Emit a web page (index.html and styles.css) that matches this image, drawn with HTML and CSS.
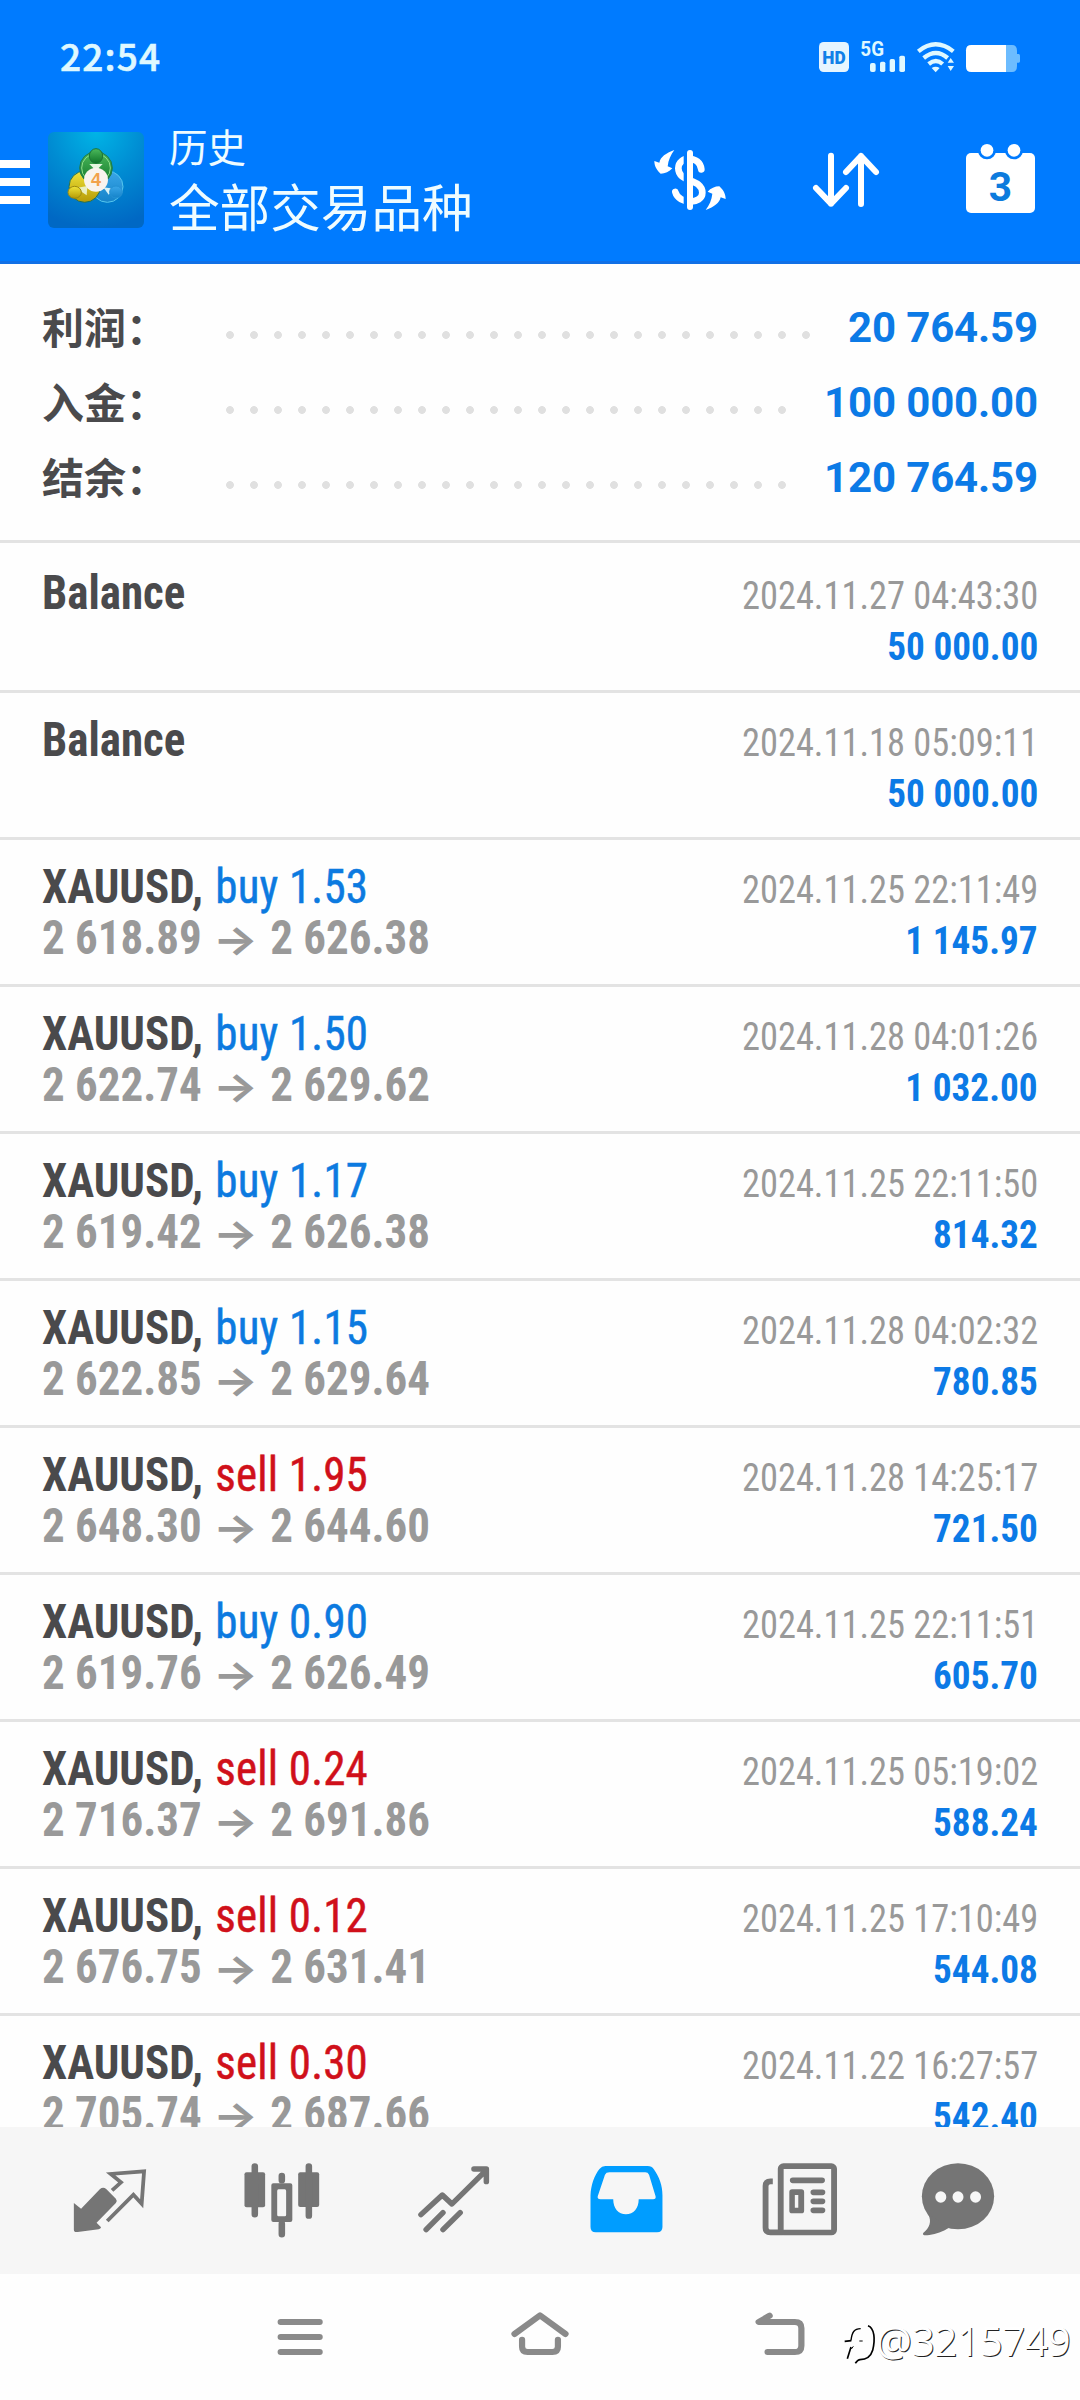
FILE: index.html
```html
<!DOCTYPE html>
<html lang="zh-CN">
<head>
<meta charset="utf-8">
<title>历史</title>
<link rel="stylesheet" href="styles.css">
</head>
<body>
<div class="screen">
  <header class="header">
    <div class="status">
      <span class="clock">22:54</span>
      <div class="status-icons">
        <svg width="30" height="35" viewBox="27 27 90 105"><rect x="27" y="36" width="90" height="90" rx="14" fill="#e6f5ff"/><text x="37" y="101" class="hd-text" textLength="70" lengthAdjust="spacingAndGlyphs">HD</text></svg>
        <svg width="46" height="35" viewBox="150 27 138 105" fill="#dff8ff"><text x="151" y="79" class="net-text" textLength="71" lengthAdjust="spacingAndGlyphs">5G</text><rect x="180" y="99" width="17" height="27" rx="6"/><rect x="210" y="95" width="16" height="31" rx="5"/><rect x="239" y="87" width="16" height="39" rx="5"/><rect x="268" y="77" width="17" height="49" rx="5"/></svg>
        <svg width="38" height="35" viewBox="322 27 114 105"><g fill="none" stroke="#dff8ff" stroke-width="13"><path d="M326 64Q378 22 431 64M342 84Q379 54 414 84M357 102Q379 84 399 102"/></g><path fill="#dff8ff" d="M366 114Q378 106 390 114L378 127ZM423 84L433 98H414ZM414 108H433L423 123Z"/></svg>
        <svg width="54" height="35" viewBox="468 27 162 105"><path fill="#6cbcff" d="M585 45H606Q621 45 621 62V72H626Q630 72 630 77V94Q630 98 626 98H621V108Q621 126 606 126H585Z"/><path fill="#fff" d="M588 45H484Q468 45 468 61V110Q468 126 484 126H588Z"/></svg>
      </div>
    </div>
    <div class="appbar">
      <div class="menu"><i></i><i></i><i></i></div>
      <svg class="logo" width="96" height="96" viewBox="24 24 288 288">
        <defs>
          <radialGradient id="bg" cx=".5" cy="0" r="1"><stop offset="0" stop-color="#00b4e6"/><stop offset=".5" stop-color="#008bd2"/><stop offset="1" stop-color="#0068c4"/></radialGradient>
          <linearGradient id="gr" x1="0" y1="0" x2="0" y2="1"><stop offset="0" stop-color="#4cba5c"/><stop offset="1" stop-color="#0f7428"/></linearGradient>
          <linearGradient id="ye" x1="0" y1="0" x2="0" y2="1"><stop offset="0" stop-color="#f0e43a"/><stop offset="1" stop-color="#b59a06"/></linearGradient>
          <linearGradient id="bl" x1="0" y1="0" x2="0" y2="1"><stop offset="0" stop-color="#3aa6e8"/><stop offset="1" stop-color="#1583c9"/></linearGradient>
        </defs>
        <rect x="24" y="24" width="288" height="288" rx="18" fill="url(#bg)"/>
        <g stroke-width="3">
          <circle cx="202" cy="188" r="47" fill="url(#bl)" stroke="#55c6ee"/>
          <circle cx="134" cy="188" r="47" fill="url(#ye)" stroke="#1f6f5b"/>
          <circle cx="168" cy="132" r="49" fill="url(#gr)" stroke="#1c7a4e"/>
          <circle cx="168" cy="132" r="43" fill="none" stroke="#8fdc8b"/>
          <path d="M190 190L222 194L206 212Z" fill="#d7f2f7" stroke="none"/>
          <path d="M108 192L142 186L140 214Z" fill="#e9efc0" stroke="none"/>
          <path d="M148 120H188L168 140Z" fill="#e4f7df" stroke="none"/>
          <ellipse cx="168" cy="96" rx="20" ry="22" fill="url(#gr)" stroke="#1d7336"/>
          <ellipse cx="104" cy="205" rx="20" ry="18" fill="url(#ye)" stroke="#9c8a10"/>
          <ellipse cx="228" cy="204" rx="19" ry="18" fill="url(#bl)" stroke="#2491d4"/>
        </g>
        <circle cx="168" cy="167" r="36" fill="#f8f3ee"/>
        <text x="168" y="186" class="logo-text">4</text>
      </svg>
      <div class="titles"><div class="subtitle">历史</div><div class="title">全部交易品种</div></div>
      <div class="actions">
        <svg width="84" height="84" viewBox="144 414 252 252"><path d="M304 508C300 466 235 466 235 505C235 550 307 534 307 578C307 614 236 614 226 576" fill="none" stroke="#fff" stroke-width="20" stroke-linecap="round"/><path d="M256 460V620" stroke="#007bff" stroke-width="10"/><path d="M270 459V621" stroke="#fff" stroke-width="18" stroke-linecap="round"/><g fill="#fff"><path id="sw" d="M223 450C197 460 182 470 178 488L163 483C163 500 172 512 182 521C195 521 208 515 217 505L203 499C205 480 212 465 223 450Z"/><use href="#sw" transform="rotate(180 270 540)"/></g></svg>
        <svg width="84" height="84" viewBox="609 414 252 252" fill="none" stroke="#fff" stroke-width="18" stroke-linecap="round" stroke-linejoin="round"><path d="M693 467V611M648 564L693 611L738 564M783 612V468M738 516L783 468L828 516"/></svg>
        <svg width="84" height="84" viewBox="1074 414 252 252"><rect x="1098" y="459" width="207" height="180" rx="15" fill="#fff"/><g fill="#007bff"><circle cx="1161" cy="451" r="27"/><circle cx="1242" cy="451" r="27"/></g><g fill="#fff"><circle cx="1161" cy="451" r="19"/><circle cx="1242" cy="451" r="19"/></g><text x="1201" y="602" class="cal-text">3</text></svg>
      </div>
    </div>
  </header>

  <main class="content">
    <section class="summary">
      <div class="sum-row"><span class="sum-label">利润：</span><span class="leader"></span><span class="sum-value">20 764.59</span></div>
      <div class="sum-row"><span class="sum-label">入金：</span><span class="leader"></span><span class="sum-value">100 000.00</span></div>
      <div class="sum-row"><span class="sum-label">结余：</span><span class="leader"></span><span class="sum-value">120 764.59</span></div>
    </section>
    <section class="deals">
      <div class="deal"><span class="symbol">Balance</span><span class="date">2024.11.27 04:43:30</span><span class="prices"></span><span class="profit">50 000.00</span></div>
      <div class="deal"><span class="symbol">Balance</span><span class="date">2024.11.18 05:09:11</span><span class="prices"></span><span class="profit">50 000.00</span></div>
      <div class="deal"><span class="symbol">XAUUSD, <span class="buy">buy 1.53</span></span><span class="date">2024.11.25 22:11:49</span><span class="prices">2 618.89<b class="arrow">→</b>2 626.38</span><span class="profit">1 145.97</span></div>
      <div class="deal"><span class="symbol">XAUUSD, <span class="buy">buy 1.50</span></span><span class="date">2024.11.28 04:01:26</span><span class="prices">2 622.74<b class="arrow">→</b>2 629.62</span><span class="profit">1 032.00</span></div>
      <div class="deal"><span class="symbol">XAUUSD, <span class="buy">buy 1.17</span></span><span class="date">2024.11.25 22:11:50</span><span class="prices">2 619.42<b class="arrow">→</b>2 626.38</span><span class="profit">814.32</span></div>
      <div class="deal"><span class="symbol">XAUUSD, <span class="buy">buy 1.15</span></span><span class="date">2024.11.28 04:02:32</span><span class="prices">2 622.85<b class="arrow">→</b>2 629.64</span><span class="profit">780.85</span></div>
      <div class="deal"><span class="symbol">XAUUSD, <span class="sell">sell 1.95</span></span><span class="date">2024.11.28 14:25:17</span><span class="prices">2 648.30<b class="arrow">→</b>2 644.60</span><span class="profit">721.50</span></div>
      <div class="deal"><span class="symbol">XAUUSD, <span class="buy">buy 0.90</span></span><span class="date">2024.11.25 22:11:51</span><span class="prices">2 619.76<b class="arrow">→</b>2 626.49</span><span class="profit">605.70</span></div>
      <div class="deal"><span class="symbol">XAUUSD, <span class="sell">sell 0.24</span></span><span class="date">2024.11.25 05:19:02</span><span class="prices">2 716.37<b class="arrow">→</b>2 691.86</span><span class="profit">588.24</span></div>
      <div class="deal"><span class="symbol">XAUUSD, <span class="sell">sell 0.12</span></span><span class="date">2024.11.25 17:10:49</span><span class="prices">2 676.75<b class="arrow">→</b>2 631.41</span><span class="profit">544.08</span></div>
      <div class="deal"><span class="symbol">XAUUSD, <span class="sell">sell 0.30</span></span><span class="date">2024.11.22 16:27:57</span><span class="prices">2 705.74<b class="arrow">→</b>2 687.66</span><span class="profit">542.40</span></div>
    </section>
  </main>

  <nav class="tabs">
    <svg preserveAspectRatio="none" viewBox="198 416 244 252"><path fill="#757575" d="M215 548L236 565L291 506Q300 498 309 506L337 535Q342 541 337 548L281 607L294 621Q293 626 287 627L226 635Q215 637 215 628Z"/><path fill="none" stroke="#757575" stroke-width="11" d="M326 510L352 486L322 461L419 453L412 550L388 523L312 602"/></svg>
    <svg preserveAspectRatio="none" viewBox="696 416 244 252"><g fill="#757575"><rect x="709" y="456" width="60" height="105" rx="6"/><rect x="865" y="456" width="61" height="104" rx="6"/><path fill-rule="evenodd" d="M793 489H842Q848 489 848 495V599Q848 605 842 605H793Q787 605 787 599V495Q787 489 793 489ZM808 507Q804 507 804 512V583Q804 588 808 588H826Q830 588 830 583V512Q830 507 826 507Z"/></g><path stroke="#757575" stroke-width="19" stroke-linecap="round" d="M739 438V582M896 438V586M817.500 467V480M817.500 610V642"/></svg>
    <svg preserveAspectRatio="none" viewBox="1196 416 244 252"><path fill="none" stroke="#757575" stroke-width="16" stroke-linecap="round" stroke-linejoin="round" d="M1222 583L1284 524L1312 551L1411 450M1376 446H1412V484M1237 628L1286 577M1286 628L1336 577"/></svg>
    <svg preserveAspectRatio="none" viewBox="131 416 244 252"><path fill="#009dff" fill-rule="evenodd" d="M190 437H313Q325 437 331 447C347 470 356 495 356 525V620Q356 636 340 636H162Q147 636 147 620V525C148 495 158 465 173 446Q180 437 190 437ZM202 456Q192 456 189 463L168 528Q166 537 176 537H213C213 565 228 582 250 582C272 582 287 565 287 537H329Q338 537 336 528L317 463Q314 456 306 456Z"/></svg>
    <svg preserveAspectRatio="none" viewBox="634 416 244 252"><g fill="none" stroke="#757575" stroke-width="17"><rect x="700" y="437.500" width="155" height="199" rx="8"/><path d="M677 483H670Q656 483 656 497V622Q656 636 670 636H705"/><path stroke-linecap="round" d="M735 480H820M795 516H821M795 543H821M795 570H821"/></g><path fill="#757575" fill-rule="evenodd" d="M733 507H760Q768 507 768 515V571Q768 579 760 579H733Q725 579 725 571V515Q725 507 733 507ZM741 524V562H751V524Z"/></svg>
    <svg preserveAspectRatio="none" viewBox="1091 416 244 252"><g fill="#757575"><ellipse cx="1213" cy="528" rx="105" ry="99"/><path d="M1126 580C1138 605 1130 622 1112 638C1108 646 1118 646 1130 644C1150 641 1168 634 1187 622Z"/></g><g fill="#f7f7f7"><ellipse cx="1163" cy="530" rx="16" ry="17"/><ellipse cx="1213" cy="530" rx="16" ry="17"/><ellipse cx="1264" cy="530" rx="16" ry="17"/></g></svg>
  </nav>

  <div class="sysnav">
    <svg preserveAspectRatio="none" viewBox="784 861 174 180"><path d="M815 906H928M815 951H928M815 996H928"/></svg>
    <svg preserveAspectRatio="none" viewBox="-87 861 174 180"><path d="M-74 942L0 886L74 942M-52 959V980Q-52 996 -36 996H36Q52 996 52 980V959"/></svg>
    <svg preserveAspectRatio="none" viewBox="610 861 174 180"><path d="M667 887L635 906H740Q759 906 759 925V977Q759 996 740 996H661"/></svg>
  </div>

  <div class="watermark">
    <svg width="34" height="42" viewBox="25 40 102 126" fill="none" stroke="#000"><path stroke-width="4" d="M49 92C52 68 58 57 78 57"/><path stroke-width="5" d="M30 95L50 93M49 112L38 147"/><path stroke-width="3" d="M50 118L56 110M74 94H84"/><path stroke-width="5" d="M100 48C120 55 122 90 114 122C108 142 92 150 76 150Q70 150 62 161"/></svg><span>@3215749</span>
  </div>
</div>
</body>
</html>
```
FILE: styles.css
```css
* { box-sizing: border-box; }
body { margin: 0; background: #fefefe; }
.screen {
  position: relative;
  width: 1080px;
  height: 2400px;
  display: flex;
  flex-direction: column;
  overflow: hidden;
  font-family: "Roboto Condensed", Roboto, "Noto Sans CJK SC", sans-serif;
}
svg { display: block; flex: none; overflow: visible; }

.header { height: 264px; background: #007bff; border-bottom: 3px solid #1170e6; }
.status { height: 96px; display: flex; justify-content: space-between; padding: 39px 60px 0 60px; }
.clock { margin-top: -2px; font: 500 37px/37px "Noto Sans CJK SC", sans-serif; letter-spacing: 1.2px; color: #dff8ff; -webkit-text-stroke: 0.6px #dff8ff; }
.status-icons { display: flex; gap: 11px; }
.hd-text { font: 900 56px Roboto, sans-serif; fill: #1080e8; }
.net-text { font: 700 60px Roboto, sans-serif; }

.appbar { height: 168px; display: flex; align-items: center; padding-right: 38px; }
.menu { width: 30px; height: 44px; margin: 4px 18px 0 0; display: flex; flex-direction: column; justify-content: space-between; }
.menu i { height: 8px; background: #fff; }
.logo-text { font: 700 54px "Liberation Sans", sans-serif; fill: #f2a24a; text-anchor: middle; }
.titles { flex: 1; margin-left: 25px; padding-bottom: 10px; font-family: "Noto Sans CJK SC", sans-serif; color: #effcff; }
.subtitle { font-size: 38.500px; line-height: 60px; }
.title { font-size: 50.600px; line-height: 60px; }
.actions { display: flex; gap: 71px; }
.cal-text { font: 700 122px Roboto, sans-serif; fill: #0d7bdd; text-anchor: middle; }

.content { height: 1863px; overflow: hidden; }
.summary { height: 279px; padding: 27px 42px 0; border-bottom: 3px solid #e3e3e3; }
.sum-row { height: 75px; display: flex; align-items: center; }
.sum-label { width: 176px; margin-top: -6px; font: 700 42px/75px "Noto Sans CJK SC", sans-serif; color: #4a4a4c; }
.leader {
  flex: 1;
  height: 8px;
  margin: 13px 28px 0 0;
  background: radial-gradient(circle at 12px 4px, #e0e0e0 3.5px, transparent 4.300px) 0 0 / 24px 8px repeat-x;
}
.sum-value { margin-top: -2px; font: 700 42px/75px Roboto, sans-serif; letter-spacing: -0.15px; color: #0c7ae6; }

.deals { padding-top: 3px; }
.deal {
  height: 147px;
  padding: 21px 42px 0;
  border-bottom: 3px solid #e3e3e3;
  display: grid;
  grid-template-columns: 1fr auto;
  grid-template-rows: 51px 51px;
  align-items: baseline;
  line-height: 51px;
  white-space: nowrap;
}
/* the app's condensed face is narrower than the system one */
.symbol, .prices { justify-self: start; transform: scaleX(0.937); transform-origin: left; }
.symbol { font-size: 48px; font-weight: 700; color: #4a4a4c; }
.buy, .sell { margin-left: 2px; font-weight: 400; letter-spacing: 0.2px; -webkit-text-stroke: 0.5px currentColor; }
.buy { color: #0c7ae0; }
.sell { color: #d0101a; }
.date { font-size: 39px; color: #999; transform: scaleX(0.934); transform-origin: right; }
.prices { font-size: 48px; font-weight: 700; color: #999; }
.prices:empty::before { content: "\200b"; }
.arrow { display: inline-block; width: 73px; text-align: center; font: 700 40px/40px Inter, sans-serif; transform: translateX(-1px) scaleX(1.27); }
.profit { justify-self: end; font-size: 39px; font-weight: 700; color: #0c7ae6; transform: scaleX(0.954); transform-origin: right; }

.tabs {
  height: 147px;
  padding-left: 24px;
  background: #f6f6f6;
  display: grid;
  grid-template-columns: 172px 171px 173px 173px 174px 142px;
  place-items: center;
}
.tabs svg { width: 84px; height: 84px; }

.sysnav { height: 126px; padding: 0 180px; display: flex; align-items: center; }
.sysnav svg { width: 60px; height: 60px; margin: 0 90px; fill: none; stroke: #8a8a8a; stroke-width: 18px; stroke-linecap: round; stroke-linejoin: round; }

.watermark { position: absolute; left: 843px; top: 2323px; display: flex; align-items: flex-start; }
.watermark span { margin: -2px 0 0 -1px; font: 400 40px/40px "Open Sans", sans-serif; color: #fff; letter-spacing: -0.2px; text-shadow: 1px 1px 0 #222; }
```
